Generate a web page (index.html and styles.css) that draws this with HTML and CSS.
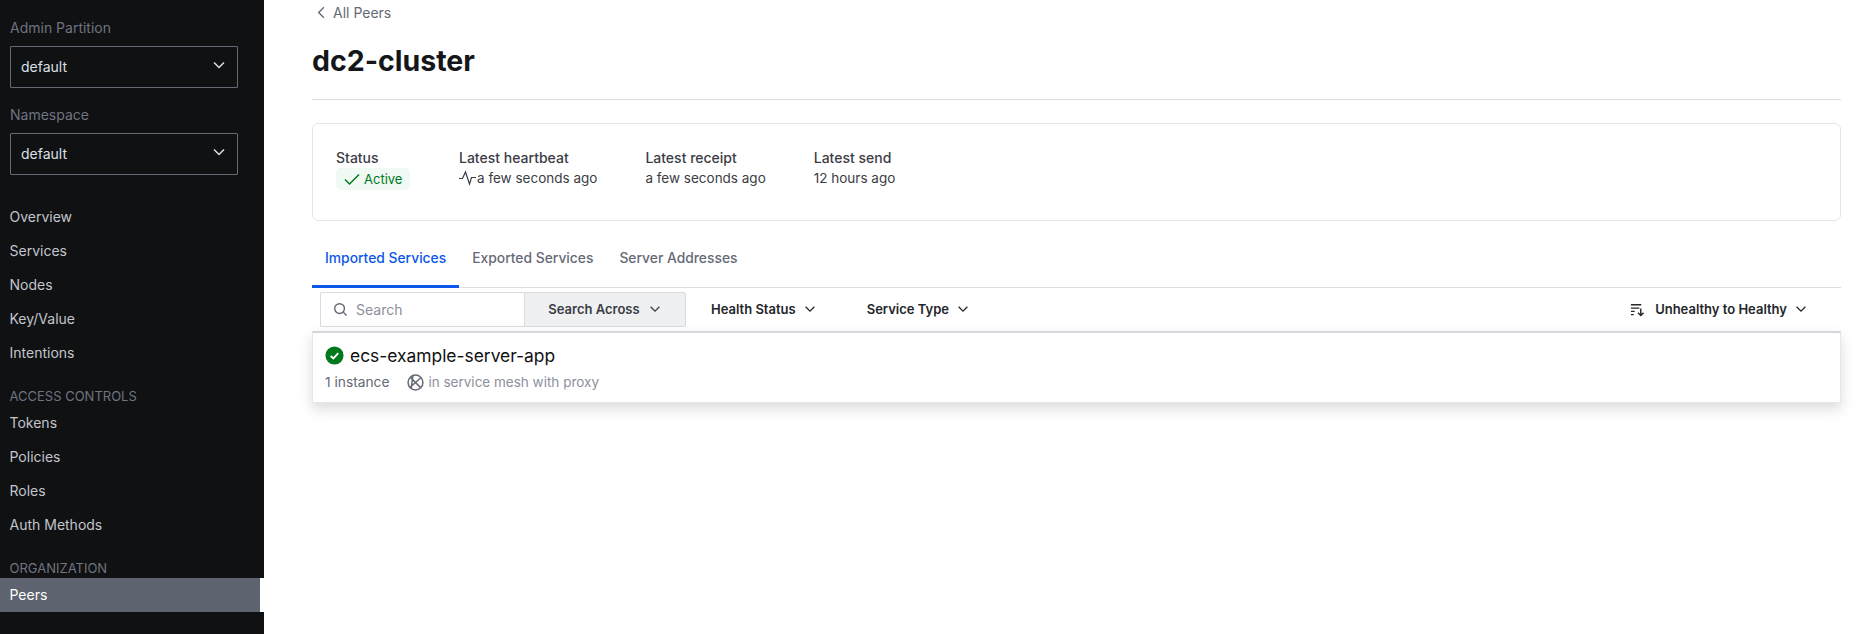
FILE: index.html
```html
<!DOCTYPE html>
<html lang="en">
<head>
    <meta charset="UTF-8">
    <title>dc2-cluster - Peers</title>
    <link rel="stylesheet" href="styles.css">
</head>
<body>

<div class="app">
    <aside class="sidebar">
        <div class="picker">
            <div class="picker-label">Admin Partition</div>
            <div class="picker-box">
                <span>default</span>
                <svg class="picker-chevron" viewBox="0 0 16 16"><path d="M3 5.500l5 5 5-5"/></svg>
            </div>
        </div>
        <div class="picker">
            <div class="picker-label">Namespace</div>
            <div class="picker-box">
                <span>default</span>
                <svg class="picker-chevron" viewBox="0 0 16 16"><path d="M3 5.500l5 5 5-5"/></svg>
            </div>
        </div>

        <nav class="nav">
            <a class="nav-item">Overview</a>
            <a class="nav-item">Services</a>
            <a class="nav-item">Nodes</a>
            <a class="nav-item">Key/Value</a>
            <a class="nav-item">Intentions</a>
            <div class="nav-title">ACCESS CONTROLS</div>
            <a class="nav-item">Tokens</a>
            <a class="nav-item">Policies</a>
            <a class="nav-item">Roles</a>
            <a class="nav-item">Auth Methods</a>
            <div class="nav-title">ORGANIZATION</div>
            <a class="nav-item active">Peers</a>
        </nav>
    </aside>

    <main class="main">
        <a class="back-link">
            <svg viewBox="0 0 16 16"><path d="M10.500 2.500L5 8l5.500 5.500"/></svg>
            All Peers
        </a>
        <h1 class="page-title">dc2-cluster</h1>

        <section class="info-card">
            <div class="info-col">
                <div class="info-label">Status</div>
                <span class="badge">
                    <svg viewBox="0 0 16 16"><path d="M1 8.500l4.500 4.500L15 3.500"/></svg>
                    Active
                </span>
            </div>
            <div class="info-col">
                <div class="info-label">Latest heartbeat</div>
                <div class="info-value">
                    <svg class="pulse" viewBox="0 0 17 16"><path d="M0 8.500h3.500L6.500 2l4 12 2-6.500H17"/></svg>
                    a few seconds ago
                </div>
            </div>
            <div class="info-col">
                <div class="info-label">Latest receipt</div>
                <div class="info-value">a few seconds ago</div>
            </div>
            <div class="info-col">
                <div class="info-label">Latest send</div>
                <div class="info-value">12 hours ago</div>
            </div>
        </section>

        <div class="tabs">
            <a class="tab selected">Imported Services</a>
            <a class="tab">Exported Services</a>
            <a class="tab">Server Addresses</a>
        </div>

        <div class="toolbar">
            <div class="search">
                <svg viewBox="0 0 16 16"><circle cx="7" cy="7" r="5.200"/><path d="M11 11l3.500 3.500"/></svg>
                <span>Search</span>
            </div>
            <div class="search-across">
                Search Across
                <svg class="chevron" viewBox="0 0 16 16"><path d="M3 5.500l5 5 5-5"/></svg>
            </div>
            <div class="filter filter-health">
                Health Status
                <svg class="chevron" viewBox="0 0 16 16"><path d="M3 5.500l5 5 5-5"/></svg>
            </div>
            <div class="filter">
                Service Type
                <svg class="chevron" viewBox="0 0 16 16"><path d="M3 5.500l5 5 5-5"/></svg>
            </div>
            <div class="filter filter-sort">
                <svg class="sort-icon" viewBox="0 0 16 16"><path d="M1 3h11M1 6.500h9M1 10h4M1 13.500h3M11.500 7v7.500M8.500 11.500l3 3 3-3"/></svg>
                Unhealthy to Healthy
                <svg class="chevron" viewBox="0 0 16 16"><path d="M3 5.500l5 5 5-5"/></svg>
            </div>
        </div>

        <div class="service-row">
            <div class="service-name">
                <svg class="status-icon" viewBox="0 0 20 20"><circle cx="10" cy="10" r="9.500"/><path d="M6 10.500l2.800 2.500L14 7.500"/></svg>
                ecs-example-server-app
            </div>
            <div class="service-meta">
                <span>1 instance</span>
                <svg class="mesh-icon" viewBox="0 0 16 16"><circle cx="8" cy="8" r="7"/><path d="M3.200 3.200l9.600 9.600M13 3.500L3 12.500M5.500 1.500L4 13.500"/></svg>
                <span class="mesh-text">in service mesh with proxy</span>
            </div>
        </div>
    </main>
</div>

</body>
</html>
```

FILE: styles.css
```css
* {
    box-sizing: border-box;
}
body {
    margin: 0;
    background: #fff;
    font-family: Inter, "Noto Sans", sans-serif;
    font-size: 14px;
    color: #3b3d45;
}
svg {
    display: block;
    fill: none;
    stroke: currentColor;
    stroke-width: 1.5;
}

.app {
    display: flex;
    height: 634px;
    overflow: hidden;
}

/* sidebar */
.sidebar {
    flex: 0 0 264px;
    padding-top: 18px;
    background: #101113;
    color: #c2c5cb;
}
.picker {
    padding: 0 26px 0 10px;
    margin-bottom: 17px;
}
.picker-label {
    height: 19px;
    margin-bottom: 9px;
    line-height: 19px;
    color: #6f7480;
}
.picker-box {
    display: flex;
    align-items: center;
    justify-content: space-between;
    height: 42px;
    padding: 0 10px 2px;
    border: 1px solid #656a76;
    border-radius: 1px;
    color: #dce0e6;
}
.picker-chevron {
    width: 16px;
    height: 16px;
    margin-top: -2px;
}
.nav {
    margin-top: 25px;
}
.nav-item {
    display: block;
    height: 34px;
    padding-left: 9.500px;
    line-height: 34px;
}
.nav-item.active {
    background: #5d6470;
    border-right: 4px solid #fff;
    color: #fff;
}
.nav-title {
    height: 23px;
    margin-top: 13px;
    padding-left: 9.500px;
    font-size: 13px;
    line-height: 26px;
    color: #6f7480;
}

/* main column */
.main {
    flex: 1;
    min-width: 0;
    padding: 4px 17px 0 48px;
}
.back-link {
    display: flex;
    align-items: center;
    gap: 4px;
    height: 18px;
    padding: 0 0 1px 2px;
    font-size: 14px;
    color: #656a76;
}
.back-link svg {
    width: 15px;
    height: 15px;
}
.page-title {
    height: 78px;
    margin: 0;
    padding-top: 20px;
    border-bottom: 1px solid #dedfe3;
    font-size: 28.500px;
    font-weight: 700;
    line-height: 38px;
    color: #15161a;
}

.info-card {
    display: flex;
    height: 98px;
    margin-top: 23px;
    padding: 24px 23px 0;
    border: 1px solid #e3e4e7;
    border-radius: 6px;
}
.info-col {
    margin-right: 48px;
}
.info-col:first-child {
    width: 123px;
    margin-right: 0;
}
.info-label {
    height: 20px;
    line-height: 20px;
    font-weight: 500;
}
.info-value {
    display: flex;
    align-items: center;
    gap: 1px;
    height: 20px;
    font-size: 13.500px;
    line-height: 20px;
}
.pulse {
    width: 17px;
    height: 16px;
    stroke-width: 1.200;
}
.badge {
    display: inline-flex;
    align-items: center;
    gap: 4px;
    height: 22px;
    padding: 0 8px;
    border-radius: 5px;
    background: #f0f9f3;
    font-size: 13px;
    color: #00781e;
}
.badge svg {
    width: 16px;
    height: 16px;
}

.tabs {
    display: flex;
    height: 67px;
    border-bottom: 1px solid #dedfe3;
}
.tab {
    height: 67px;
    padding: 27px 13px 0;
    font-size: 13.850px;
    line-height: 20px;
    color: #656a76;
    font-weight: 500;
}
.tab.selected {
    border-bottom: 3px solid #0c56e9;
    color: #0c56e9;
}

.toolbar {
    display: flex;
    align-items: center;
    height: 43px;
    padding: 0 0 1px 8px;
    font-size: 13px;
    font-weight: 600;
    color: #24262b;
}
.search {
    display: flex;
    align-items: center;
    gap: 8px;
    width: 204px;
    height: 35px;
    padding-left: 12px;
    border: 1px solid #d9dade;
    border-right: 0;
    border-radius: 2px 0 0 2px;
    font-size: 14px;
    font-weight: 400;
    color: #8c909c;
}
.search svg {
    width: 15px;
    height: 15px;
    color: #656a76;
}
.search-across {
    display: flex;
    align-items: center;
    justify-content: center;
    gap: 8px;
    width: 162px;
    height: 35px;
    border: 1px solid #d9dade;
    border-radius: 0 2px 2px 0;
    background: #eff0f2;
    color: #3b3d45;
}
.chevron {
    width: 14px;
    height: 14px;
}
.filter {
    display: flex;
    align-items: center;
    gap: 7px;
    margin-left: 50px;
}
.filter-health {
    margin-left: 25px;
}
.filter-sort {
    margin-left: auto;
    margin-right: 33px;
}
.sort-icon {
    width: 15px;
    height: 15px;
    margin-right: 3px;
}

.service-row {
    height: 72px;
    padding: 11px 12px 0;
    border: 1px solid #e6e7ea;
    border-top: 2px solid #d5d6dc;
    box-shadow: 0 6px 12px rgba(59, 61, 69, 0.18);
}
.service-name {
    display: flex;
    align-items: center;
    gap: 6px;
    height: 22px;
    font-size: 17.400px;
    color: #101113;
}
.status-icon {
    width: 19px;
    height: 19px;
}
.status-icon circle {
    fill: #00781e;
    stroke: none;
}
.status-icon path {
    stroke: #fff;
    stroke-width: 2;
}
.service-meta {
    display: flex;
    align-items: center;
    height: 20px;
    margin-top: 6px;
    font-size: 13.750px;
    color: #656a76;
}
.mesh-icon {
    width: 17px;
    height: 17px;
    margin-left: 18px;
    margin-right: 4px;
    stroke-width: 1.400;
}
.mesh-text {
    font-size: 13.500px;
    color: #8c909c;
}
```
